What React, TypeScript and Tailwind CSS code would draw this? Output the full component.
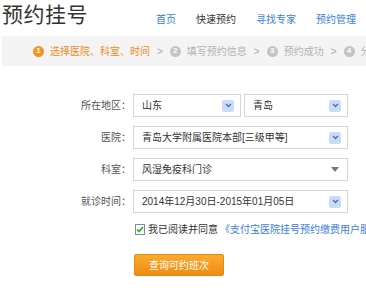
const font = "font-['Liberation_Sans','Noto_Sans_CJK_SC',sans-serif]";

const steps = [
  { n: 1, label: "选择医院、科室、时间", active: true },
  { n: 2, label: "填写预约信息" },
  { n: 3, label: "预约成功" },
  { n: 4, label: "分享" },
];

function BlueArrow() {
  return (
    <span className="flex h-[12px] w-[12px] shrink-0 items-center justify-center rounded-[2px] bg-[#cddcf6]">
      <svg width="7" height="5" viewBox="0 0 7 5">
        <path d="M1 1 L3.5 3.5 L6 1" fill="none" stroke="#4a6da8" strokeWidth="1.3" />
      </svg>
    </span>
  );
}

function GrayArrow() {
  return (
    <span className="flex h-[12px] w-[12px] shrink-0 items-center justify-center">
      <svg width="8" height="5" viewBox="0 0 8 5">
        <path d="M0 0 H8 L4 5 Z" fill="#777" />
      </svg>
    </span>
  );
}

function Select({ value, className, gray }: { value: string; className: string; gray?: boolean }) {
  return (
    <div
      className={`flex h-[23px] items-center justify-between border border-[#d6d6d6] bg-white pl-[8px] pr-[6px] text-[10px] text-[#333] ${className}`}
    >
      <span className="overflow-hidden whitespace-nowrap">{value}</span>
      {gray ? <GrayArrow /> : <BlueArrow />}
    </div>
  );
}

function Row({ label, children }: { label: string; children: React.ReactNode }) {
  return (
    <div className="flex items-center">
      <div className="w-[133px] pr-[2px] text-right text-[10px] text-[#555]">{label}</div>
      {children}
    </div>
  );
}

export default function App() {
  return (
    <div className={`h-[292px] w-[366px] overflow-hidden bg-white ${font}`}>
      <div className="flex h-[36px] items-start">
        <h1 className="ml-[2px] mt-[1px] text-[21px] leading-[28px] tracking-[0.5px] text-[#333]">预约挂号</h1>
        <nav className="ml-auto mt-[12px] flex gap-[20px] pr-[10px] text-[10px]">
          <span className="text-[#3b7ddd]">首页</span>
          <span className="text-[#333]">快速预约</span>
          <span className="text-[#3b7ddd]">寻找专家</span>
          <span className="text-[#3b7ddd]">预约管理</span>
        </nav>
      </div>

      <div className="ml-[2px] flex h-[30px] items-center gap-[7px] overflow-hidden whitespace-nowrap bg-[#f4f4f4] pl-[31px] text-[10px]">
        {steps.map((s, i) => (
          <div key={s.n} className="flex shrink-0 items-center gap-[6px]">
            {i > 0 && <span className="mr-[1px] text-[10px] font-bold text-[#bbb]">&gt;</span>}
            <span
              className={`flex h-[11px] w-[11px] items-center justify-center rounded-full text-[8px] font-bold text-white ${
                s.active ? "bg-[#f7931e]" : "bg-[#c4c4c4]"
              }`}
            >
              {s.n}
            </span>
            <span className={s.active ? "text-[#f18a1c]" : "text-[#b3b3b3]"}>{s.label}</span>
          </div>
        ))}
      </div>

      <div className="mt-[28px] flex flex-col gap-[9px]">
        <Row label="所在地区：">
          <Select value="山东" className="w-[108px]" />
          <Select value="青岛" className="ml-[3px] w-[104px]" />
        </Row>
        <Row label="医院：">
          <Select value="青岛大学附属医院本部[三级甲等]" className="w-[215px]" />
        </Row>
        <Row label="科室：">
          <Select value="风湿免疫科门诊" className="w-[215px]" gray />
        </Row>
        <Row label="就诊时间：">
          <Select value="2014年12月30日-2015年01月05日" className="w-[215px]" />
        </Row>
      </div>

      <div className="ml-[135px] mt-[10px] flex h-[12px] items-center whitespace-nowrap text-[10px]">
        <span className="flex h-[11px] w-[11px] items-center justify-center border border-[#7a8ca8] bg-white">
          <svg width="8" height="7" viewBox="0 0 8 7">
            <path d="M1 3.5 L3 5.5 L7 1" fill="none" stroke="#2aa32a" strokeWidth="1.6" />
          </svg>
        </span>
        <span className="ml-[3px] text-[#333]">我已阅读并同意</span>
        <span className="ml-[2px] text-[#3b7ddd]">《支付宝医院挂号预约缴费用户服务协议》</span>
      </div>

      <button className="ml-[134px] mt-[19px] flex h-[22px] w-[90px] items-center justify-center rounded-[2px] border border-[#e58a10] bg-gradient-to-b from-[#f9ab2e] to-[#f08b12] text-[10px] text-white">
        查询可约班次
      </button>
    </div>
  );
}
